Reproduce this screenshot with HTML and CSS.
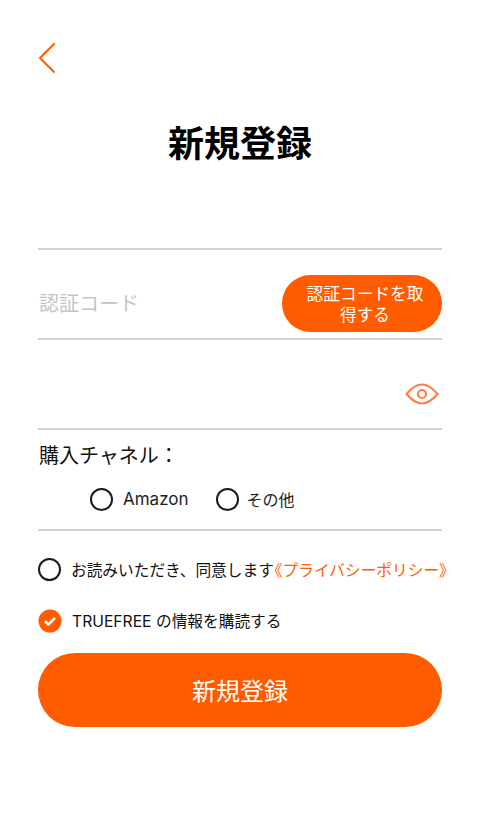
FILE: index.html
```html
<!DOCTYPE html>
<html lang="ja">
<head>
<meta charset="utf-8">
<title>新規登録</title>
<link rel="stylesheet" href="styles.css">
</head>
<body>
<main class="page">
  <a class="back" aria-label="戻る">
    <svg width="18" height="32" viewBox="0 0 18 32"><path d="M16.500 1.500 2 16l14.500 14.500" fill="none" stroke="#ff5c00" stroke-width="2"/></svg>
  </a>
  <h1 class="title">新規登録</h1>
  <div class="field field-first"></div>
  <div class="field field-code">
    <span class="placeholder">認証コード</span>
    <button class="code-btn">認証コードを取得する</button>
  </div>
  <div class="field field-pass">
    <svg class="eye" width="34" height="22" viewBox="0 0 34 22"><path d="M1.500 11C7 4.500 11.500 1.500 17 1.500S27 4.500 32.500 11C27 17.500 22.500 20.500 17 20.500S7 17.500 1.500 11Z" fill="none" stroke="#ff8044" stroke-width="2.200"/><circle cx="17" cy="11" r="4" fill="none" stroke="#ff8044" stroke-width="2.200"/></svg>
  </div>
  <div class="channel">
    <div class="channel-label">購入チャネル：</div>
    <div class="channel-options">
      <label class="option"><span class="radio"></span><span class="option-amazon">Amazon</span></label>
      <label class="option"><span class="radio"></span><span class="option-other">その他</span></label>
    </div>
  </div>
  <div class="check-row check-first">
    <span class="radio"></span>
    <span class="check-text check-text-cjk">お読みいただき、同意します<span class="link">《プライバシーポリシー》</span></span>
  </div>
  <div class="check-row check-second">
    <svg class="checked" width="24" height="24" viewBox="0 0 24 24"><circle cx="12" cy="12" r="11.500" fill="#ff5c00"/><path d="M7 12.300l3.400 3.200L17 9" fill="none" stroke="#fff" stroke-width="2.600"/></svg>
    <span class="check-text">TRUEFREE の情報を購読する</span>
  </div>
  <button class="submit">新規登録</button>
</main>
</body>
</html>
```
FILE: styles.css
```css
* { box-sizing: border-box; }
html, body { margin: 0; padding: 0; background: #fff; }
body {
  width: 480px;
  height: 833px;
  overflow: hidden;
  font-family: "Noto Sans CJK JP", "Noto Sans", sans-serif;
  color: #111;
}
.page { padding: 42px 38px 0 38px; }
.back { display: block; width: 18px; height: 32px; }
.back svg { display: block; }
.title {
  margin: 42px 0 0;
  font-size: 36px;
  line-height: 50px;
  font-weight: 700;
  text-align: center;
  color: #000;
}
.field {
  display: flex;
  align-items: center;
  justify-content: space-between;
  border-bottom: 2px solid #d2d2d2;
}
.field-first { height: 84px; }
.field-code { height: 90px; padding-top: 19px; }
.field-pass { height: 90px; justify-content: flex-end; padding-right: 3px; padding-top: 19px; }
.placeholder { font-size: 20px; color: #c4c4c4; padding-left: 1px; padding-bottom: 2px; }
.code-btn {
  width: 160px;
  height: 57px;
  border: 0;
  border-radius: 28.500px;
  background: #ff5c00;
  color: #fff;
  font: 400 16.700px/21px "Noto Sans CJK JP", sans-serif;
  padding: 0 17px 0 23px;
}
.eye { display: block; }
.channel { height: 101px; border-bottom: 2px solid #d2d2d2; }
.channel-label { font-size: 20px; line-height: 28px; padding-top: 11px; padding-left: 1px; }
.channel-options { display: flex; padding-left: 52px; margin-top: 18px; gap: 27px; }
.option { display: flex; align-items: center; font-size: 16px; line-height: 24px; }
.radio {
  display: block;
  flex: none;
  width: 23px;
  height: 23px;
  border: 2px solid #1a1a1a;
  border-radius: 50%;
}
.option-amazon { margin-left: 10px; font-family: "Inter", "Noto Sans", sans-serif; font-size: 17px; color: #222; }
.option-other { margin-left: 8px; color: #222; }
.check-row { display: flex; align-items: center; height: 24px; }
.check-first { margin-top: 26px; }
.check-second { margin-top: 28px; }
.check-text {
  margin-left: 10px;
  padding-top: 2px;
  font-family: "Inter", "Noto Sans CJK JP", sans-serif;
  font-size: 15.700px;
  line-height: 24px;
  white-space: nowrap;
  color: #111;
}
.check-text-cjk { padding-top: 4px; }
.link { color: #ff5c00; margin-left: -7px; }
.checked { display: block; flex: none; }
.submit {
  display: block;
  width: 404px;
  height: 74px;
  margin-top: 20px;
  border: 0;
  border-radius: 37px;
  background: #ff5c00;
  color: #fff;
  font: 400 24px/34px "Noto Sans CJK JP", sans-serif;
}
```
